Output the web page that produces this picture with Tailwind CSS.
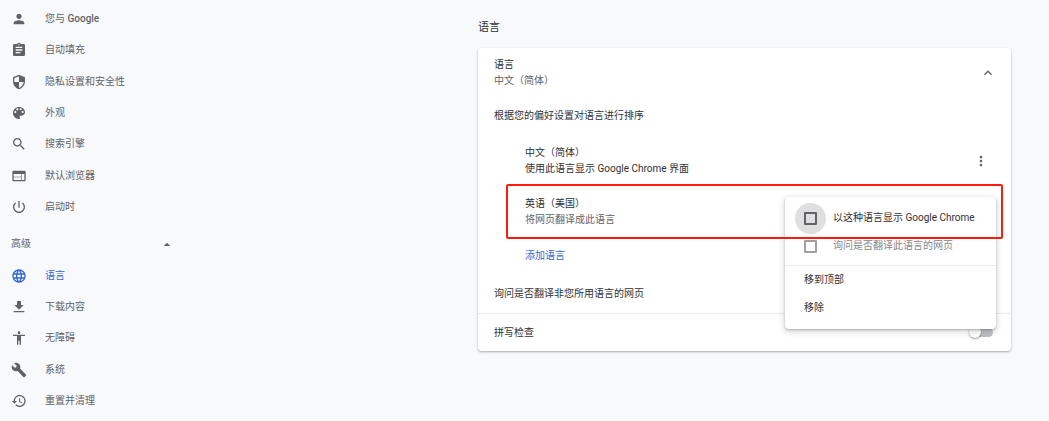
<!DOCTYPE html>
<html lang="zh-CN">
<head>
    <meta charset="UTF-8">
    <meta name="viewport" content="width=device-width, initial-scale=1.0">
    <title>设置 - 语言</title>
    <script src="https://cdn.jsdelivr.net/npm/@tailwindcss/browser@4"></script>
</head>
<body class="min-h-screen bg-[#f8f9fb] font-['Roboto','Noto_Sans_CJK_SC',sans-serif] text-[10px] leading-4 text-[#303134]">
<div class="flex">
    <!-- Sidebar -->
    <nav class="w-[440px] shrink-0 pt-[3px] text-[#5f6368]">
        <div class="grid h-[220px] auto-rows-fr">
            <a href="#people" class="flex items-center gap-[18px] pl-[11px]">
                <svg class="size-4 fill-current" viewBox="0 0 24 24"><path d="M12 12c2.21 0 4-1.79 4-4s-1.79-4-4-4-4 1.79-4 4 1.79 4 4 4zm0 2c-2.67 0-8 1.34-8 4v2h16v-2c0-2.66-5.33-4-8-4z"/></svg>
                <span>您与 <span class="font-medium">Google</span></span>
            </a>
            <a href="#autofill" class="flex items-center gap-[18px] pl-[11px]">
                <svg class="size-4 fill-current" viewBox="0 0 24 24"><path d="M19 3h-4.18C14.4 1.84 13.3 1 12 1c-1.3 0-2.4.84-2.82 2H5c-1.1 0-2 .9-2 2v14c0 1.1.9 2 2 2h14c1.1 0 2-.9 2-2V5c0-1.1-.9-2-2-2zm-7 0c.55 0 1 .45 1 1s-.45 1-1 1-1-.45-1-1 .45-1 1-1zm2 14H7v-2h7v2zm3-4H7v-2h10v2zm0-4H7V7h10v2z"/></svg>
                <span>自动填充</span>
            </a>
            <a href="#privacy" class="flex items-center gap-[18px] pl-[11px]">
                <svg class="size-4 fill-current" viewBox="0 0 24 24"><path d="M12 1L3 5v6c0 5.55 3.84 10.74 9 12 5.16-1.26 9-6.45 9-12V5l-9-4zm0 10.99h7c-.53 4.12-3.28 7.79-7 8.94V12H5V6.3l7-3.11v8.8z"/></svg>
                <span>隐私设置和安全性</span>
            </a>
            <a href="#appearance" class="flex items-center gap-[18px] pl-[11px]">
                <svg class="size-4 fill-current" viewBox="0 0 24 24"><path d="M12 3c-4.97 0-9 4.03-9 9s4.03 9 9 9c.83 0 1.5-.67 1.5-1.5 0-.39-.15-.74-.39-1.01-.23-.26-.38-.61-.38-.99 0-.83.67-1.5 1.5-1.5H16c2.76 0 5-2.24 5-5 0-4.42-4.03-8-9-8zm-5.5 9c-.83 0-1.5-.67-1.5-1.5S5.67 9 6.5 9 8 9.67 8 10.5 7.33 12 6.5 12zm3-4C8.67 8 8 7.33 8 6.5S8.67 5 9.5 5s1.5.67 1.5 1.5S10.33 8 9.5 8zm5 0c-.83 0-1.5-.67-1.5-1.5S13.67 5 14.5 5s1.5.67 1.5 1.5S15.33 8 14.5 8zm3 4c-.83 0-1.5-.67-1.5-1.5S16.67 9 17.5 9s1.5.67 1.5 1.5-.67 1.5-1.5 1.5z"/></svg>
                <span>外观</span>
            </a>
            <a href="#search" class="flex items-center gap-[18px] pl-[11px]">
                <svg class="size-4 fill-current" viewBox="0 0 24 24"><path d="M15.5 14h-.79l-.28-.27C15.41 12.59 16 11.11 16 9.5 16 5.91 13.09 3 9.5 3S3 5.91 3 9.5 5.91 16 9.5 16c1.61 0 3.09-.59 4.23-1.57l.27.28v.79l5 4.99L20.49 19l-4.99-5zm-6 0C7.01 14 5 11.99 5 9.5S7.01 5 9.5 5 14 7.01 14 9.5 11.99 14 9.5 14z"/></svg>
                <span>搜索引擎</span>
            </a>
            <a href="#default-browser" class="flex items-center gap-[18px] pl-[11px]">
                <svg class="size-4 fill-current" viewBox="0 0 24 24"><path d="M20 4H4c-1.1 0-1.99.9-1.99 2L2 18c0 1.1.9 2 2 2h16c1.1 0 2-.9 2-2V6c0-1.1-.9-2-2-2zm-5 14H4v-4h11v4zm0-5H4V9h11v4zm5 5h-4V9h4v9z"/></svg>
                <span>默认浏览器</span>
            </a>
            <a href="#startup" class="flex items-center gap-[18px] pl-[11px]">
                <svg class="size-4 fill-current" viewBox="0 0 24 24"><path d="M13 3h-2v10h2V3zm4.83 2.17l-1.42 1.42C17.99 7.86 19 9.81 19 12c0 3.87-3.13 7-7 7s-7-3.13-7-7c0-2.19 1.01-4.14 2.58-5.42L6.17 5.17C4.23 6.82 3 9.26 3 12c0 4.97 4.03 9 9 9s9-4.03 9-9c0-2.74-1.23-5.18-3.17-6.83z"/></svg>
                <span>启动时</span>
            </a>
        </div>

        <button type="button" class="mt-1 flex h-[33px] w-[175px] items-center justify-between pl-[11px]">
            <span>高级</span>
            <svg class="size-4 fill-current" viewBox="0 0 24 24"><path d="M7 15l5-5 5 5z"/></svg>
        </button>

        <div class="grid h-[157px] auto-rows-fr">
            <a href="#languages" class="flex items-center gap-[18px] pl-[11px] text-[#3367d6]">
                <svg class="size-4 fill-current" viewBox="0 0 24 24"><path d="M11.99 2C6.47 2 2 6.48 2 12s4.47 10 9.99 10C17.52 22 22 17.52 22 12S17.52 2 11.99 2zm6.93 6h-2.95c-.32-1.25-.78-2.45-1.38-3.56 1.84.63 3.37 1.91 4.33 3.56zM12 4.04c.83 1.2 1.48 2.53 1.91 3.96h-3.82c.43-1.43 1.08-2.76 1.91-3.96zM4.26 14C4.1 13.36 4 12.69 4 12s.1-1.36.26-2h3.38c-.08.66-.14 1.32-.14 2 0 .68.06 1.34.14 2H4.26zm.82 2h2.95c.32 1.25.78 2.45 1.38 3.56-1.84-.63-3.37-1.9-4.33-3.56zm2.95-8H5.08c.96-1.66 2.49-2.93 4.33-3.56C8.81 5.55 8.35 6.75 8.03 8zM12 19.96c-.83-1.2-1.48-2.53-1.91-3.96h3.82c-.43 1.43-1.08 2.76-1.91 3.96zM14.34 14H9.66c-.09-.66-.16-1.32-.16-2 0-.68.07-1.35.16-2h4.68c.09.65.16 1.32.16 2 0 .68-.07 1.34-.16 2zm.25 5.56c.6-1.11 1.06-2.31 1.38-3.56h2.95c-.96 1.65-2.49 2.93-4.33 3.56zM16.36 14c.08-.66.14-1.32.14-2 0-.68-.06-1.34-.14-2h3.38c.16.64.26 1.31.26 2s-.1 1.36-.26 2h-3.38z"/></svg>
                <span>语言</span>
            </a>
            <a href="#downloads" class="flex items-center gap-[18px] pl-[11px]">
                <svg class="size-4 fill-current" viewBox="0 0 24 24"><path d="M19 9h-4V3H9v6H5l7 7 7-7zM4 18v2h16v-2H4z"/></svg>
                <span>下载内容</span>
            </a>
            <a href="#accessibility" class="flex items-center gap-[18px] pl-[11px]">
                <svg class="size-4 fill-current" viewBox="0 0 24 24"><path d="M12 2c1.1 0 2 .9 2 2s-.9 2-2 2-2-.9-2-2 .9-2 2-2zm9 7h-6v13h-2v-6h-2v6H9V9H3V7h18v2z"/></svg>
                <span>无障碍</span>
            </a>
            <a href="#system" class="flex items-center gap-[18px] pl-[11px]">
                <svg class="size-4 fill-current" viewBox="0 0 24 24"><path d="M22.7 19l-9.1-9.1c.9-2.3.4-5-1.5-6.9-2-2-5-2.4-7.400-1.300L9 6 6 9 1.600 4.700C.4 7.100.9 10.100 2.900 12.100c1.900 1.900 4.600 2.400 6.900 1.500l9.100 9.100c.4.4 1 .4 1.400 0l2.300-2.300c.5-.4.5-1.100.1-1.400z"/></svg>
                <span>系统</span>
            </a>
            <a href="#reset" class="flex items-center gap-[18px] pl-[11px]">
                <svg class="size-4 fill-current" viewBox="0 0 24 24"><path d="M13 3c-4.97 0-9 4.03-9 9H1l3.89 3.89.07.14L9 12H6c0-3.87 3.13-7 7-7s7 3.13 7 7-3.13 7-7 7c-1.93 0-3.68-.79-4.94-2.06l-1.42 1.42C8.27 19.99 10.51 21 13 21c4.97 0 9-4.03 9-9s-4.03-9-9-9zm-1 5v5l4.28 2.54.72-1.21-3.5-2.08V8H12z"/></svg>
                <span>重置并清理</span>
            </a>
        </div>
    </nav>

    <!-- Language settings -->
    <main class="min-w-0 flex-1 px-[38px] pt-5">
        <h1 class="text-[11px] leading-4">语言</h1>

        <section class="mt-3 rounded-sm bg-white shadow-[0_1px_2px_rgba(60,64,67,0.3),0_1px_3px_rgba(60,64,67,0.15)]">
            <div class="flex items-center justify-between pt-[9px] pr-[15px] pb-2 pl-4">
                <div>
                    <h2>语言</h2>
                    <p class="text-[#5f6368]">中文（简体）</p>
                </div>
                <button type="button" aria-label="收起">
                    <svg class="size-4 fill-[#5f6368]" viewBox="0 0 24 24"><path d="M12 8l-6 6 1.41 1.41L12 10.83l4.59 4.58L18 14z"/></svg>
                </button>
            </div>

            <p class="flex h-[38px] items-center pl-4">根据您的偏好设置对语言进行排序</p>

            <ul>
                <li class="flex h-[51px] items-center justify-between pr-[22px] pl-[47px]">
                    <div>
                        <p>中文（简体）</p>
                        <p>使用此语言显示 Google Chrome 界面</p>
                    </div>
                    <button type="button" aria-label="更多操作">
                        <svg class="size-4 fill-[#5f6368]" viewBox="0 0 24 24"><path d="M12 8c1.1 0 2-.9 2-2s-.9-2-2-2-2 .9-2 2 .9 2 2 2zm0 2c-1.1 0-2 .9-2 2s.9 2 2 2 2-.9 2-2-.9-2-2-2zm0 6c-1.1 0-2 .9-2 2s.9 2 2 2 2-.9 2-2-.9-2-2-2z"/></svg>
                    </button>
                </li>
                <li class="relative flex h-[51px] items-center pl-[47px]">
                    <div>
                        <p>英语（美国）</p>
                        <p class="text-[#5f6368]">将网页翻译成此语言</p>
                    </div>

                    <!-- Popup menu of the row -->
                    <div class="absolute top-[11px] right-[15px] z-10 w-[211px] rounded bg-white py-[7px] shadow-[0_1px_2px_rgba(60,64,67,0.3),0_2px_6px_1px_rgba(60,64,67,0.2)]">
                        <label class="flex h-7 items-center gap-4 pl-[19px]">
                            <span class="-m-[9px] grid size-[31px] place-items-center rounded-full bg-[#dfdfdf]">
                                <input type="checkbox" class="size-[13px] appearance-none rounded-[1px] border-2 border-[#5f6368]">
                            </span>
                            <span>以这种语言显示 Google Chrome</span>
                        </label>
                        <label class="flex h-7 items-center gap-4 pl-[19px] opacity-60">
                            <input type="checkbox" disabled class="size-[13px] appearance-none rounded-[1px] border-2 border-[#5f6368]">
                            <span>询问是否翻译此语言的网页</span>
                        </label>
                        <div class="mt-[5px] border-t border-[#e8eaed]">
                            <button type="button" class="flex h-7 w-full items-center pl-[19px]">移到顶部</button>
                            <button type="button" class="flex h-7 w-full items-center pl-[19px]">移除</button>
                        </div>
                    </div>

                    <!-- Red highlight frame -->
                    <div class="pointer-events-none absolute -top-[2px] right-2 left-7 z-20 h-[55px] rounded-xs border-2 border-[#fe1b0c]"></div>
                </li>
            </ul>

            <div class="flex h-[38px] items-center pl-[47px]">
                <button type="button" class="text-[#3367d6]">添加语言</button>
            </div>

            <label class="flex h-[38px] items-center justify-between pr-4 pl-4">
                <span>询问是否翻译非您所用语言的网页</span>
                <input type="checkbox" role="switch" checked class="relative h-2 w-[22px] appearance-none rounded-full bg-[#99b3ea] before:absolute before:-top-[2px] before:right-0 before:size-3 before:rounded-full before:bg-[#3367d6]">
            </label>
            <label class="flex h-[38px] items-center justify-between border-t border-[#e8eaed] pr-[18px] pl-4">
                <span>拼写检查</span>
                <input type="checkbox" role="switch" class="relative h-[9px] w-[22px] appearance-none rounded-full bg-[#bdc1c6] before:absolute before:-top-[2px] before:-left-[2px] before:size-3 before:rounded-full before:bg-white before:shadow-[0_1px_2px_rgba(0,0,0,0.4)]">
            </label>
        </section>
    </main>
</div>
</body>
</html>
